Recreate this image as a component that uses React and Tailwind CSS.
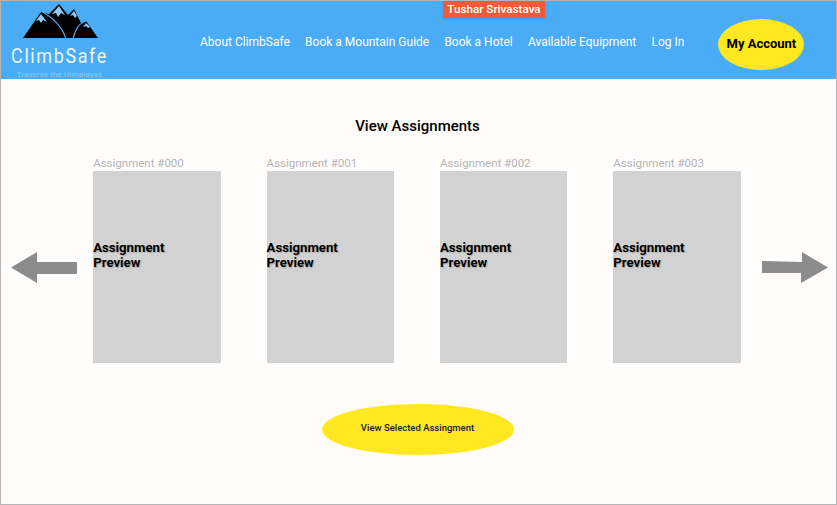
import React from 'react'

const navLinks = ['About ClimbSafe', 'Book a Mountain Guide', 'Book a Hotel', 'Available Equipment', 'Log In']
const assignments = ['Assignment #000', 'Assignment #001', 'Assignment #002', 'Assignment #003']

function Logo() {
  return (
    <svg width="75" height="36" viewBox="0 0 75 36" className="block">
      <path d="M0 35 L18 9 L26 11 L36 1 L45 12 L51 6 L58 20 L63 18 L75 35 Z" fill="#000" />
      {/* snow caps */}
      <path d="M18 11 L13 18 L16 17 L18 20 L20 17 L24 19 Z" fill="#8fcbf8" />
      <path d="M36 3 L29 11 L33 10 L35 14 L38 10 L42 12 Z" fill="#8fcbf8" />
      <path d="M51 8 L47 13 L50 12 L52 15 L54 13 Z" fill="#8fcbf8" />
      <path d="M63 20 L60 24 L63 23 L65 25 L67 24 Z" fill="#8fcbf8" />
      {/* ridge lines */}
      <path d="M18 8 C29 14 39 23 43 36" fill="none" stroke="#4aabf7" strokeWidth="1.2" />
      <path d="M63 18 C56 20 52 27 50 36" fill="none" stroke="#4aabf7" strokeWidth="1.2" />
    </svg>
  )
}

function Arrow({ right }) {
  return (
    <svg width="66" height="31" viewBox="0 0 66 31" className="mt-[15px] shrink-0">
      {right
        ? <path d="M0 9 L40 10 L40 0 L66 15.5 L39 31 L39 21 L0 21 Z" fill="#8c8c8c" />
        : <path d="M66 10 L26 10 L26 0 L0 15.5 L26 31 L26 22 L66 22 Z" fill="#8c8c8c" />}
    </svg>
  )
}

function AssignmentCard({ label }) {
  return (
    <div className="w-[127.4px] shrink-0">
      <div className="h-[14px] text-[11.5px] leading-[12px] text-[#b5b5b5]">{label}</div>
      <div className="h-[192px] bg-[#d2d2d2] pt-[69px] text-[13.2px] leading-[15px] font-bold text-black [text-shadow:1px_1px_1px_rgba(0,0,0,0.2)]">
        Assignment<br />Preview
      </div>
    </div>
  )
}

export default function App() {
  return (
    <div className="relative h-[505px] w-[837px] overflow-hidden border border-[#b4b4b4] bg-[#fffcfc] font-['Roboto',sans-serif]">
      {/* Header */}
      <header className="flex h-[78px] items-center bg-[#4aabf7]">
        <div className="ml-[11px] flex w-[95px] shrink-0 flex-col items-center self-start pt-[2px]">
          <div className="ml-[1px]"><Logo /></div>
          <div className="mt-[7px] origin-top scale-y-115 text-[18px] leading-[18px] tracking-[1.6px] whitespace-nowrap text-[#eaf6ff]">ClimbSafe</div>
          <div className="mt-[6px] text-[8px] leading-[10px] tracking-[0.1px] whitespace-nowrap text-[#8fcbf8]">Traverse the Himalayas</div>
        </div>
        <nav className="ml-[93px] flex gap-[15.2px] pt-[3px] text-[12px] whitespace-nowrap text-white">
          {navLinks.map((link) => (
            <a key={link}>{link}</a>
          ))}
        </nav>
        <button className="mt-[8px] ml-[34px] flex h-[51px] w-[86px] shrink-0 items-center justify-center rounded-[50%] bg-[#ffe81f] text-[13px] font-bold whitespace-nowrap text-black">
          My Account
        </button>
      </header>

      <div className="absolute top-0 left-[442px] flex h-[17px] w-[102px] items-center justify-center bg-[#ee5a3a] text-[11.7px] font-medium whitespace-nowrap text-white shadow-sm">
        Tushar Srivastava
      </div>

      {/* Content */}
      <main className="flex flex-col items-center">
        <h1 className="mt-[38px] mr-[2px] text-[15px] leading-[18px] font-medium text-black">View Assignments</h1>
        <div className="mt-[22px] flex w-full items-center pl-[10px]">
          <Arrow />
          <div className="ml-[16.2px] flex gap-[46px]">
            {assignments.map((a) => (
              <AssignmentCard key={a} label={a} />
            ))}
          </div>
          <div className="ml-[21.6px]"><Arrow right /></div>
        </div>
        <button className="mt-[41px] mr-[2px] flex h-[51px] w-[192px] items-center justify-center rounded-[50%] bg-[#ffe81f] pb-[3px] text-[9.5px] font-medium text-[#1a1a1a]">
          View Selected Assingment
        </button>
      </main>
    </div>
  )
}
